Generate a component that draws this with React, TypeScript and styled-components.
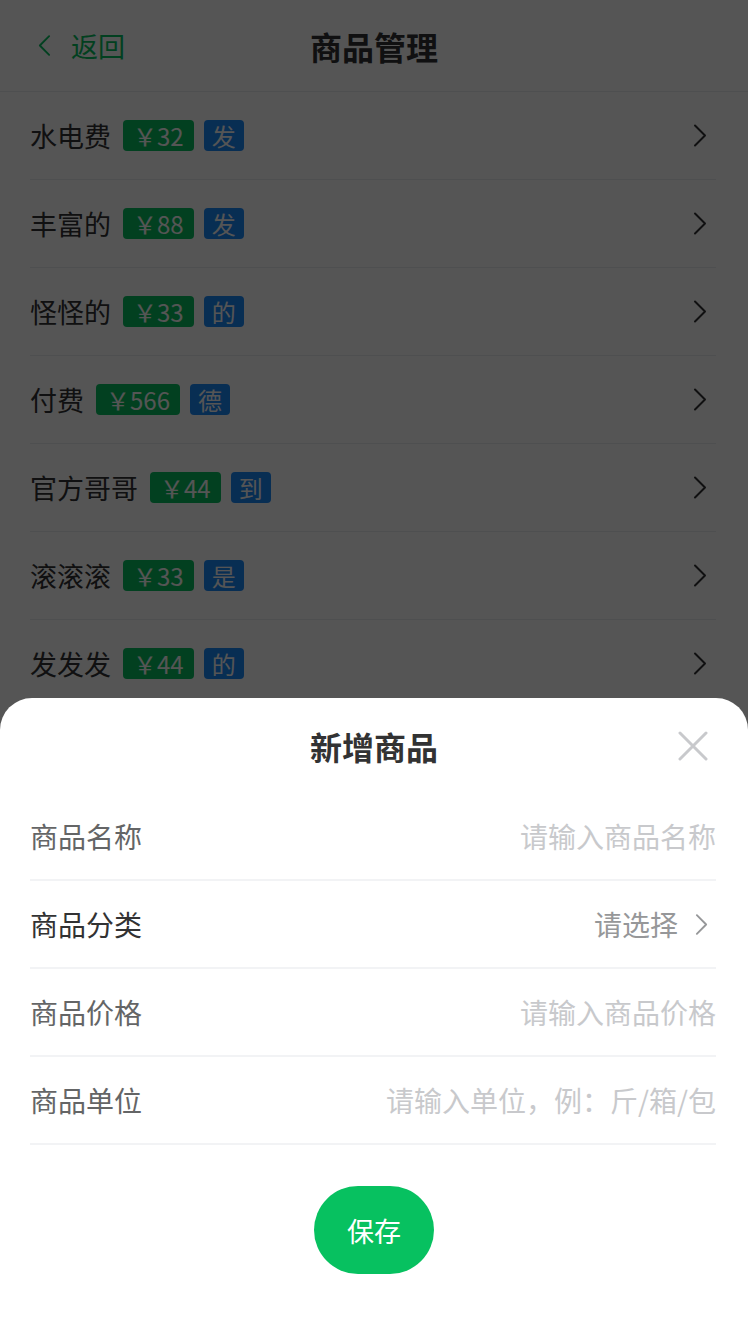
import React from "react";
import styled, { createGlobalStyle } from "styled-components";

const GlobalStyle = createGlobalStyle`
  html, body {
    margin: 0;
    padding: 0;
    background: #ffffff;
  }
  body {
    font-family: "Noto Sans CJK SC", "Noto Sans", sans-serif;
    color: #323233;
  }
  * {
    box-sizing: border-box;
  }
`;

type Goods = { name: string; price: string; tag: string };

const goods: Goods[] = [
  { name: "水电费", price: "32", tag: "发" },
  { name: "丰富的", price: "88", tag: "发" },
  { name: "怪怪的", price: "33", tag: "的" },
  { name: "付费", price: "566", tag: "德" },
  { name: "官方哥哥", price: "44", tag: "到" },
  { name: "滚滚滚", price: "33", tag: "是" },
  { name: "发发发", price: "44", tag: "的" },
];

const fields = [
  { label: "商品名称", placeholder: "请输入商品名称" },
  { label: "商品分类", select: "请选择" },
  { label: "商品价格", placeholder: "请输入商品价格" },
  { label: "商品单位", placeholder: "请输入单位，例：斤/箱/包" },
];

const Page = styled.div`
  width: 748px;
  height: 1332px;
  position: relative;
  overflow: hidden;
  background: #ffffff;
`;

const NavBar = styled.div`
  height: 92px;
  display: grid;
  grid-template-columns: 1fr auto 1fr;
  align-items: center;
  padding: 0 36px;
  border-bottom: 1px solid #ebedf0;
`;

const BackLink = styled.div`
  display: flex;
  align-items: center;
  gap: 20px;
  padding-left: 2px;
  color: #07c160;
  font-size: 27px;
  line-height: 1;
`;

const NavTitle = styled.div`
  font-size: 32px;
  font-weight: 700;
  color: #323233;
`;

const List = styled.div`
  display: flex;
  flex-direction: column;
`;

const GoodsRow = styled.div`
  height: 88px;
  margin: 0 32px 0 30px;
  padding-right: 9px;
  display: flex;
  align-items: center;
  justify-content: space-between;
  border-bottom: 1px solid #ebedf0;
`;

const GoodsInfo = styled.div`
  display: flex;
  align-items: center;
  gap: 10px;
`;

const GoodsName = styled.span`
  font-size: 27px;
  color: #323233;
  margin-right: 2px;
`;

const Tag = styled.span<{ $tone: "green" | "blue" }>`
  height: 31px;
  padding: 0 ${(p) => (p.$tone === "green" ? "10px" : "8px")};
  border-radius: 4px;
  display: inline-flex;
  align-items: center;
  font-size: 24px;
  line-height: 1;
  color: #ffffff;
  background: ${(p) => (p.$tone === "green" ? "#07c160" : "#1989fa")};
`;

const Mask = styled.div`
  position: absolute;
  inset: 0;
  background: rgba(0, 0, 0, 0.667);
`;

const Sheet = styled.div`
  position: absolute;
  left: 0;
  right: 0;
  bottom: 0;
  height: 634px;
  background: #ffffff;
  border-radius: 32px 32px 0 0;
  display: flex;
  flex-direction: column;
`;

const SheetHeader = styled.div`
  height: 95px;
  position: relative;
  display: flex;
  align-items: center;
  justify-content: center;
`;

const SheetTitle = styled.div`
  font-size: 32px;
  font-weight: 700;
  color: #323233;
`;

const CloseButton = styled.div`
  position: absolute;
  right: 38px;
  top: 31px;
  width: 34px;
  height: 34px;
  display: flex;
  align-items: center;
  justify-content: center;
`;

const FieldRow = styled.div`
  height: 88px;
  margin: 0 32px 0 30px;
  display: flex;
  align-items: center;
  justify-content: space-between;
  border-bottom: 2px solid #f2f3f5;
`;

const FieldLabel = styled.span<{ $strong?: boolean }>`
  font-size: 28px;
  color: ${(p) => (p.$strong ? "#323233" : "#646566")};
`;

const Placeholder = styled.span`
  font-size: 28px;
  color: #c8c9cc;
`;

const SelectValue = styled.span`
  display: flex;
  align-items: center;
  gap: 17px;
  margin-right: 8px;
  font-size: 28px;
  color: #969799;
`;

const Footer = styled.div`
  display: flex;
  justify-content: center;
  padding-top: 41px;
`;

const SaveButton = styled.div`
  width: 120px;
  height: 88px;
  border-radius: 44px;
  background: #07c160;
  color: #ffffff;
  font-size: 27px;
  display: flex;
  align-items: center;
  justify-content: center;
`;

const Chevron = ({ dir, color, w, h }: { dir: "left" | "right"; color: string; w: number; h: number }) => (
  <svg width={w} height={h} viewBox="0 0 14 24" fill="none">
    <path
      d={dir === "right" ? "M2 2 L12 12 L2 22" : "M12 2 L2 12 L12 22"}
      stroke={color}
      strokeWidth="2"
      strokeLinecap="round"
      strokeLinejoin="round"
    />
  </svg>
);

export default function App() {
  return (
    <Page>
      <GlobalStyle />
      <NavBar>
        <BackLink>
          <Chevron dir="left" color="#07c160" w={13} h={23} />
          返回
        </BackLink>
        <NavTitle>商品管理</NavTitle>
        <div />
      </NavBar>

      <List>
        {goods.map((g) => (
          <GoodsRow key={g.name}>
            <GoodsInfo>
              <GoodsName>{g.name}</GoodsName>
              <Tag $tone="green">￥{g.price}</Tag>
              <Tag $tone="blue">{g.tag}</Tag>
            </GoodsInfo>
            <Chevron dir="right" color="#323233" w={14} h={25} />
          </GoodsRow>
        ))}
      </List>

      <Mask />

      <Sheet>
        <SheetHeader>
          <SheetTitle>新增商品</SheetTitle>
          <CloseButton>
            <svg width="30" height="30" viewBox="0 0 30 30">
              <path d="M2 2 L28 28 M28 2 L2 28" stroke="#c8c9cc" strokeWidth="3" strokeLinecap="round" />
            </svg>
          </CloseButton>
        </SheetHeader>

        {fields.map((f) => (
          <FieldRow key={f.label}>
            <FieldLabel $strong={!!f.select}>{f.label}</FieldLabel>
            {f.select ? (
              <SelectValue>
                {f.select}
                <Chevron dir="right" color="#969799" w={13} h={23} />
              </SelectValue>
            ) : (
              <Placeholder>{f.placeholder}</Placeholder>
            )}
          </FieldRow>
        ))}

        <Footer>
          <SaveButton>保存</SaveButton>
        </Footer>
      </Sheet>
    </Page>
  );
}
